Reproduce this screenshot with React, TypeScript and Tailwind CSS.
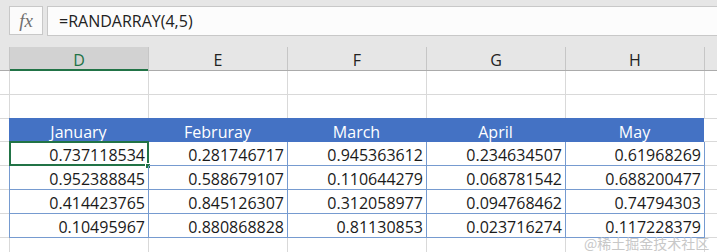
import React from 'react';

const COLS = ['D', 'E', 'F', 'G', 'H'];
const MONTHS = ['January', 'Februray', 'March', 'April', 'May'];
const DATA = [
  ['0.737118534', '0.281746717', '0.945363612', '0.234634507', '0.61968269'],
  ['0.952388845', '0.588679107', '0.110644279', '0.068781542', '0.688200477'],
  ['0.414423765', '0.845126307', '0.312058977', '0.094768462', '0.74794303'],
  ['0.10495967', '0.880868828', '0.81130853', '0.023716274', '0.117228379'],
];

// plain empty grid row (gridlines only)
function BlankRow({ h = 'h-[24px]' }: { h?: string }) {
  return (
    <div className={`flex ${h}`}>
      <div className="w-[10px] shrink-0 border-r border-b border-[#d9d9d9]" />
      {COLS.map((c) => (
        <div key={c} className="w-[139px] shrink-0 border-r border-b border-[#d9d9d9]" />
      ))}
      <div className="flex-1 border-b border-[#d9d9d9]" />
    </div>
  );
}

export default function App() {
  return (
    <div className="relative w-[717px] h-[252px] overflow-hidden bg-white font-['Open_Sans',sans-serif] text-[16px] text-[#1a1a1a]">
      {/* ===== Formula bar ===== */}
      <div className="h-[47px] bg-[#e6e6e6] pt-[6px] flex items-start">
        <div className="ml-[9px] w-[34px] h-[29px] border border-[#c8c8c8] bg-[#fbfbfb] flex items-center justify-center">
          <span className="font-['Liberation_Serif',serif] italic text-[19px] text-[#707070] leading-none">fx</span>
        </div>
        <div className="ml-[4px] flex-1 h-[30px] border-y border-l border-[#c8c8c8] bg-[#fcfcfc] flex items-center pl-[11px]">
          <span className="text-[16px] text-[#222]">=RANDARRAY(4,5)</span>
        </div>
      </div>

      {/* ===== Column headers ===== */}
      <div className="flex h-[24px] bg-[#e6e6e6] border-b border-[#ababab]">
        <div className="w-[10px] shrink-0 border-r border-[#c6c6c6]" />
        {COLS.map((c) => (
          <div
            key={c}
            className={`relative w-[139px] shrink-0 flex items-center justify-center pt-[2px] border-r border-[#c6c6c6] ${
              c === 'D' ? 'bg-[#d2d2d2] text-[#217346]' : 'text-[#222]'
            }`}
          >
            {c}
            {c === 'D' && <div className="absolute left-0 right-0 -bottom-px h-[2px] bg-[#217346]" />}
          </div>
        ))}
        <div className="flex-1" />
      </div>

      <BlankRow />
      <BlankRow />

      {/* ===== Table header ===== */}
      <div className="flex h-[24px] -mt-px">
        <div className="w-[10px] shrink-0 border-r border-b border-[#d9d9d9]" />
        <div className="w-[695px] shrink-0 flex bg-[#4472c4] text-white -ml-px">
          {MONTHS.map((m) => (
            <div key={m} className="w-[139px] shrink-0 flex items-center justify-center pt-[3px]">
              {m}
            </div>
          ))}
        </div>
        <div className="flex-1 border-b border-[#d9d9d9]" />
      </div>

      {/* ===== Data rows ===== */}
      {DATA.map((row, r) => (
        <div key={r} className="flex h-[24px]">
          <div className="w-[9px] shrink-0 border-b border-[#d9d9d9]" />
          {row.map((v, i) => (
            <div
              key={i}
              className={`relative shrink-0 flex items-center justify-end pr-[3px] pt-[2px] border-r border-b border-[#769bd0] ${
                i === 0 ? 'w-[140px] border-l' : 'w-[139px]'
              }`}
            >
              {v}
              {r === 0 && i === 0 && (
                <>
                  <div className="absolute -left-px -top-px -right-px -bottom-px border-2 border-[#217346]" />
                  <div className="absolute -right-[3px] -bottom-[4px] w-[6px] h-[6px] bg-[#217346] border border-white" />
                </>
              )}
            </div>
          ))}
          <div className="flex-1 border-b border-[#d9d9d9]" />
        </div>
      ))}

      <BlankRow h="h-[24px]" />

      {/* watermark */}
      <div className="absolute left-[584px] top-[236px] text-[14px] leading-[15px] text-[#c8c8c8] font-['Noto_Sans_CJK_SC',sans-serif] whitespace-nowrap">
        @稀土掘金技术社区
      </div>
    </div>
  );
}
